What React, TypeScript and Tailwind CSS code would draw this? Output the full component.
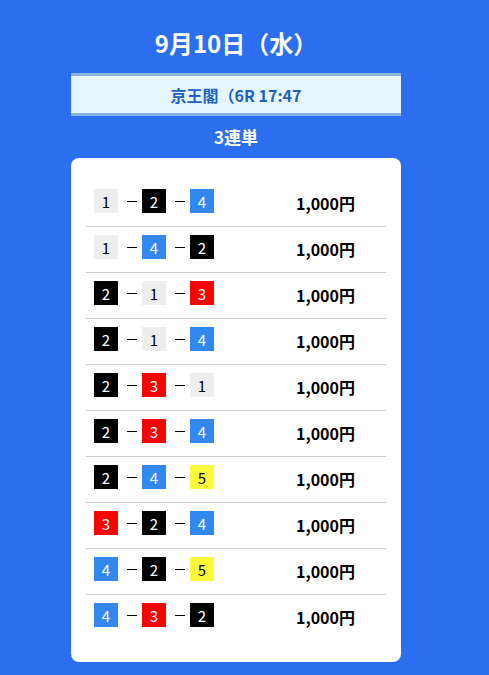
import React from 'react';

type Bet = { nums: number[]; amount: string };

const bets: Bet[] = [
  { nums: [1, 2, 4], amount: '1,000円' },
  { nums: [1, 4, 2], amount: '1,000円' },
  { nums: [2, 1, 3], amount: '1,000円' },
  { nums: [2, 1, 4], amount: '1,000円' },
  { nums: [2, 3, 1], amount: '1,000円' },
  { nums: [2, 3, 4], amount: '1,000円' },
  { nums: [2, 4, 5], amount: '1,000円' },
  { nums: [3, 2, 4], amount: '1,000円' },
  { nums: [4, 2, 5], amount: '1,000円' },
  { nums: [4, 3, 2], amount: '1,000円' },
];

const boxColor: Record<number, string> = {
  1: 'bg-[#eeeeee] text-black',
  2: 'bg-black text-white',
  3: 'bg-[#ff0000] text-white',
  4: 'bg-[#3388ee] text-white',
  5: 'bg-[#fafa3a] text-black',
};

const NumBox: React.FC<{ n: number }> = ({ n }) => (
  <div className={`w-6 h-6 flex items-center justify-center text-[15px] leading-none ${boxColor[n]}`}>
    {n}
  </div>
);

const Dash: React.FC = () => <div className="w-[10px] h-px bg-black ml-[9px] mr-[5px]" />;

const App: React.FC = () => {
  return (
    <div
      className="min-h-[675px] w-full bg-[#2b6ff0] flex flex-col items-center pt-[26px] pr-[17px]"
      style={{ fontFamily: '"Noto Sans CJK JP", "Noto Sans", sans-serif' }}
    >
      <h1 className="text-white font-bold text-[24px] leading-[34px]">9月10日（水）</h1>

      <div className="mt-[13px] w-[330px] h-[43px] bg-[#e6f6ff] border-y-[3px] border-[#8ab4e2] flex items-center justify-center">
        <span className="text-[#2062c0] font-bold text-[16px] leading-none">京王閣（6R 17:47</span>
      </div>

      <div className="mt-[9px] text-white font-bold text-[17px] leading-[24px]">3連単</div>

      <div className="mt-[9px] w-[330px] bg-white rounded-lg px-[15px] pt-[23px] pb-[22px]">
        {bets.map((bet, i) => (
          <div
            key={i}
            className={`flex items-center pt-2 pb-[13px] ${i < bets.length - 1 ? 'border-b border-[#cccccc]' : ''}`}
          >
            <div className="w-[210px] pl-2 flex items-center">
              <NumBox n={bet.nums[0]} />
              <Dash />
              <NumBox n={bet.nums[1]} />
              <Dash />
              <NumBox n={bet.nums[2]} />
            </div>
            <div className="text-black font-bold text-[16px] leading-none translate-y-[2px]">{bet.amount}</div>
          </div>
        ))}
      </div>
    </div>
  );
};

export default App;
